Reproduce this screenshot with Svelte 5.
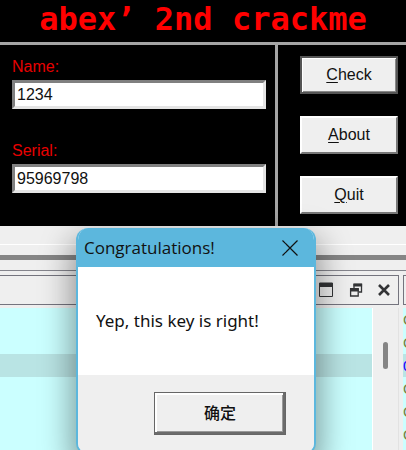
<script>
  let name = $state("1234");
  let serial = $state("95969798");

  const actions = ["Check", "About", "Quit"];
  const gutter = ["C", "C", "0", "C", "C", "C"];
</script>

<div class="desktop">
  <main class="crackme">
    <h1>abex’ 2nd crackme</h1>
    <div class="body">
      <form class="fields">
        <label for="name">Name:</label>
        <input id="name" type="text" bind:value={name} />
        <label for="serial">Serial:</label>
        <input id="serial" type="text" bind:value={serial} />
      </form>
      <div class="actions">
        {#each actions as action}
          <button type="button"><u>{action[0]}</u>{action.slice(1)}</button>
        {/each}
      </div>
    </div>
  </main>

  <section class="debugger">
    <div class="strip"></div>
    <div class="bar"></div>
    <div class="gap"></div>
    <div class="panes">
      <div class="pane">
        <div class="tools">
          <button type="button" aria-label="Maximize">
            <svg width="16" height="16" viewBox="0 0 16 16">
              <path d="M1.500 1v13.500h13V1z" fill="none" stroke="#333436" />
              <path d="M1 1h14v4H1z" fill="#333436" />
            </svg>
          </button>
          <button type="button" aria-label="Restore">
            <svg width="14" height="14" viewBox="0 0 14 14">
              <path d="M5 5V1.500h7.500V9H10" fill="none" stroke="#333436" stroke-width="1.300" />
              <path d="M4.500.5h8.600v3H4.500z" fill="#333436" />
              <path d="M1.600 6v7h7.600V6z" fill="none" stroke="#333436" stroke-width="1.300" />
              <path d="M1 5h8.800v3.500H1z" fill="#333436" />
            </svg>
          </button>
          <button type="button" aria-label="Close pane">
            <svg width="12" height="12" viewBox="0 0 12 12">
              <path d="M1 1l10 10M11 1L1 11" stroke="#333436" stroke-width="2.600" />
            </svg>
          </button>
        </div>
        <div class="listing">
          <div class="code"><div class="selected"></div></div>
          <div class="scroll"><div class="thumb"></div></div>
        </div>
      </div>
      <div class="pane next">
        <div class="tools"></div>
        <div class="gutter">
          {#each gutter as mark, i}
            <span class:current={i === 2}>{mark}</span>
          {/each}
        </div>
      </div>
    </div>
  </section>

  <div class="dialog" role="dialog" aria-labelledby="title">
    <header>
      <h2 id="title">Congratulations!</h2>
      <button type="button" aria-label="Close">
        <svg width="16" height="16" viewBox="0 0 16 16">
          <path d="M.5.5l15 15M15.500.5l-15 15" stroke="#111" stroke-width="1.200" />
        </svg>
      </button>
    </header>
    <p>Yep, this key is right!</p>
    <footer><button type="button">确定</button></footer>
  </div>
</div>

<style>
  :global(body) {
    margin: 0;
  }
  .desktop {
    position: relative;
    height: 100vh;
    overflow: hidden;
    display: flex;
    flex-direction: column;
    background: #efefef;
    font-family: "Liberation Sans", "Noto Sans CJK SC", sans-serif;
  }
  button,
  input {
    box-sizing: border-box;
    font-family: inherit;
    font-size: 16px;
    color: #111;
  }
  .crackme {
    background: #000;
  }
  h1 {
    margin: 0;
    height: 42px;
    line-height: 38px;
    text-align: center;
    color: #f00;
    font-family: "DejaVu Sans Mono", monospace;
    font-size: 32px;
    border-bottom: 3px solid #a5a5a5;
  }
  .body {
    display: flex;
    height: 181px;
  }
  .fields {
    flex: 1;
    display: flex;
    flex-direction: column;
    padding: 11px 9px 0 12px;
    border-right: 3px solid #a5a5a5;
  }
  label {
    height: 24px;
    line-height: 22px;
    color: #e80000;
    font-size: 16px;
  }
  .fields input {
    height: 29px;
    margin: 0 0 31px;
    padding: 0 2px;
    background: #fff;
    border: 3px solid;
    border-color: #808080 #e4e4e4 #e4e4e4 #808080;
    border-radius: 0;
    outline: none;
  }
  .actions {
    display: flex;
    flex-direction: column;
    gap: 22px;
    padding: 11px 8px 0 22px;
    width: 98px;
  }
  .actions button {
    height: 38px;
    padding: 0;
    background: #efefef;
    border: 2px solid;
    border-color: #fff #777 #777 #fff;
  }
  .actions button:first-child {
    border-color: #555;
    box-shadow: inset 1px 1px #fff, inset -1px -1px #888;
  }
  u {
    text-underline-offset: 2px;
  }
  .debugger {
    flex: 1;
    display: flex;
    flex-direction: column;
  }
  .strip {
    height: 18px;
    border-bottom: 1px solid #fff;
  }
  .bar {
    height: 5px;
    margin-top: 10px;
    background: #858585;
  }
  .gap {
    height: 10px;
    border-bottom: 1px solid #84848c;
  }
  .panes {
    flex: 1;
    display: flex;
    gap: 4px;
    padding-top: 4px;
  }
  .pane {
    flex: 1;
    display: flex;
    flex-direction: column;
  }
  .pane.next {
    flex: 0 0 3px;
    overflow: hidden;
  }
  .tools {
    box-sizing: border-box;
    height: 30px;
    display: flex;
    align-items: center;
    justify-content: flex-end;
    gap: 15px;
    padding-right: 8px;
    border: 1px solid #74747e;
    border-left: 0;
  }
  .next .tools {
    border-left: 1px solid #74747e;
    border-right: 0;
    padding: 0;
  }
  .tools button {
    display: flex;
    padding: 0;
    border: 0;
    background: none;
  }
  .listing {
    flex: 1;
    display: flex;
    margin-top: 3px;
  }
  .code {
    flex: 1;
    background: #cbffff;
    padding-top: 46px;
  }
  .selected {
    height: 23px;
    background: #b9e4e4;
  }
  .scroll {
    box-sizing: border-box;
    width: 27px;
    padding: 34px 0 0 10px;
    border-left: 1px solid #fff;
    border-right: 1px solid #e2e2e2;
  }
  .thumb {
    width: 5px;
    height: 27px;
    border-radius: 3px;
    background: #858585;
  }
  .gutter {
    flex: 1;
    display: flex;
    flex-direction: column;
    margin-top: 3px;
    background: #cbffff;
    color: #7d7d3c;
    font-size: 15px;
    line-height: 23px;
  }
  .current {
    color: #20f;
    background: #b9e4e4;
  }
  .dialog {
    position: absolute;
    left: 76px;
    top: 228px;
    box-sizing: border-box;
    width: 240px;
    overflow: hidden;
    background: #fff;
    border: 2px solid #5cb7dd;
    border-top: 0;
    border-radius: 12px;
    box-shadow: 0 14px 32px 4px rgba(0, 0, 0, 0.4);
    color: #111;
  }
  header {
    display: flex;
    align-items: center;
    justify-content: space-between;
    height: 39px;
    padding: 0 16px 0 6px;
    background: #5cb7dd;
  }
  h2 {
    margin: 0;
    font-family: "Open Sans", sans-serif;
    font-size: 17px;
    font-weight: 400;
  }
  header button {
    display: flex;
    padding: 0;
    border: 0;
    background: none;
  }
  p {
    margin: 0;
    padding: 0 18px;
    line-height: 108px;
    font-family: "Noto Sans", sans-serif;
    font-size: 17px;
  }
  footer {
    height: 61px;
    padding-top: 17px;
    padding-right: 28px;
    display: flex;
    justify-content: flex-end;
    align-items: flex-start;
    background: #efefef;
  }
  footer button {
    width: 132px;
    height: 43px;
    padding: 0 0 3px;
    font-weight: 500;
    background: #efefef;
    border: 1px solid #666;
    box-shadow: inset -2px -2px #6b6b6b, inset 2px 2px #fff, inset -3px -3px #999;
  }
</style>
